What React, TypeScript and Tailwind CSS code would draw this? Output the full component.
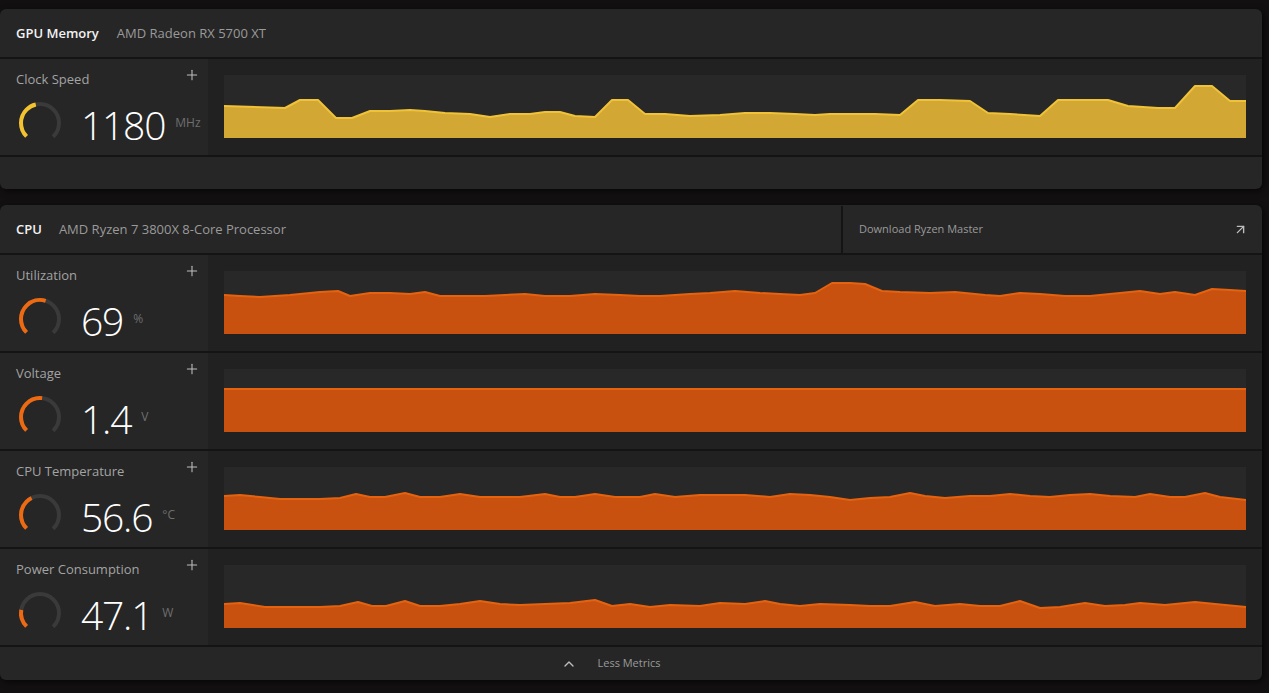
import React from "react";
import { Plus, ArrowUpRight, ChevronUp } from "lucide-react";

type Pt = [number, number];

const CHART_X = 224;
const CHART_W = 1022;
const CHART_H = 63;

const clock: Pt[] = [[224,106],[285,108],[300,100],[318,100],[336,118],[352,118],[370,111],[390,111],[410,110],[425,111],[445,113],[470,114],[490,117],[510,114],[530,114],[545,112],[560,112],[575,116],[595,117],[612,100],[628,100],[645,114],[665,114],[690,116],[720,115],[745,113],[770,113],[795,114],[815,115],[830,114],[855,114],[875,114],[900,115],[918,100],[940,100],[970,101],[988,113],[1010,114],[1040,116],[1058,100],[1080,100],[1108,100],[1128,106],[1158,108],[1175,108],[1195,86],[1212,86],[1230,101],[1246,101]];

const util: Pt[] = [[224,295],[240,296],[260,297],[290,295],[320,292],[338,291],[350,296],[370,293],[390,293],[410,294],[425,292],[440,296],[460,296],[485,296],[505,295],[525,294],[545,296],[570,296],[595,294],[620,295],[640,296],[660,296],[690,294],[710,293],[735,291],[760,293],[780,294],[800,295],[815,293],[832,283],[850,283],[865,284],[882,291],[900,292],[930,293],[955,292],[985,295],[1000,296],[1020,293],[1040,294],[1065,296],[1090,296],[1110,294],[1140,291],[1160,294],[1175,292],[1195,295],[1212,289],[1230,290],[1246,291]];

const volt: Pt[] = [[224,389],[1246,389]];

const temp: Pt[] = [[224,496],[240,495],[260,497],[280,499],[320,499],[340,498],[356,494],[370,497],[385,497],[405,493],[420,497],[440,497],[460,494],[480,497],[500,497],[520,497],[545,494],[560,497],[575,497],[595,494],[615,497],[640,497],[655,494],[675,497],[700,495],[720,495],[745,495],[770,497],[790,494],[810,495],[830,497],[850,500],[870,498],[890,497],[910,493],[925,496],[945,498],[970,496],[990,496],[1010,494],[1030,496],[1050,497],[1070,495],[1090,494],[1110,496],[1135,497],[1150,494],[1170,497],[1185,497],[1205,493],[1220,497],[1246,500]];

const power: Pt[] = [[224,604],[240,603],[265,607],[290,607],[320,607],[340,606],[358,602],[372,606],[386,606],[405,601],[420,606],[440,606],[460,604],[480,601],[500,604],[520,605],[545,604],[570,603],[595,600],[612,606],[630,604],[650,607],[670,605],[700,606],[720,603],[745,604],[765,601],[780,604],[800,606],[820,604],[850,605],[870,606],[890,606],[915,602],[935,606],[960,604],[980,606],[1000,606],[1020,601],[1040,608],[1060,607],[1085,603],[1105,606],[1125,605],[1140,603],[1165,605],[1195,602],[1215,604],[1246,607]];

const Chart: React.FC<{ pts: Pt[]; top: number; fill: string; line: string }> = ({ pts, top, fill, line }) => {
  const rel = pts.map(([x, y]) => `${x - CHART_X},${y - top}`);
  const area = `0,${CHART_H} ${rel.join(" ")} ${CHART_W},${CHART_H}`;
  return (
    <svg width={CHART_W} height={CHART_H} viewBox={`0 0 ${CHART_W} ${CHART_H}`} className="block bg-[#282828]">
      <polygon points={area} fill={fill} />
      <polyline points={rel.join(" ")} fill="none" stroke={line} strokeWidth={2} strokeLinejoin="round" />
    </svg>
  );
};

const Gauge: React.FC<{ frac: number; color: string }> = ({ frac, color }) => {
  const r = 19;
  const c = 2 * Math.PI * r;
  const track = c * 0.75;
  return (
    <svg width={48} height={48} viewBox="0 0 48 48" className="shrink-0">
      <g transform="rotate(135 24 24)">
        <circle cx={24} cy={24} r={r} fill="none" stroke="#3a3a3a" strokeWidth={4} strokeDasharray={`${track} ${c}`} />
        <circle cx={24} cy={24} r={r} fill="none" stroke={color} strokeWidth={4} strokeDasharray={`${track * frac} ${c}`} />
      </g>
    </svg>
  );
};

type Metric = {
  label: string;
  value: string;
  unit: string;
  frac: number;
  pts: Pt[];
  top: number;
};

const Row: React.FC<{ m: Metric; color: string; fill: string; line: string }> = ({ m, color, fill, line }) => (
  <div className="flex h-[96px]">
    <div className="w-[208px] shrink-0 bg-[#262626] pl-4 pr-[8px] pt-[10px]">
      <div className="flex items-start justify-between">
        <span className="text-[13px] text-[#a3a3a3] leading-5">{m.label}</span>
        <Plus size={16} strokeWidth={1.6} className="text-[#bdbdbd] -mt-[2px]" />
      </div>
      <div className="flex items-center mt-[10px]">
        <Gauge frac={m.frac} color={color} />
        <span className="ml-[17px] text-[39px] font-light text-white leading-none mt-[3px] tracking-[-1.2px]">{m.value}</span>
        <span className="ml-[10px] text-[12px] text-[#6f6f6f]">{m.unit}</span>
      </div>
    </div>
    <div className="flex-1 bg-[#212121] p-4">
      <Chart pts={m.pts} top={m.top} fill={fill} line={line} />
    </div>
  </div>
);

const Sep = () => <div className="h-[2px] bg-[#141414]" />;

const cpu: Metric[] = [
  { label: "Utilization", value: "69", unit: "%", frac: 0.56, pts: util, top: 271 },
  { label: "Voltage", value: "1.4", unit: "V", frac: 0.52, pts: volt, top: 369 },
  { label: "CPU Temperature", value: "56.6", unit: "°C", frac: 0.4, pts: temp, top: 467 },
  { label: "Power Consumption", value: "47.1", unit: "W", frac: 0.2, pts: power, top: 565 },
];

export default function App() {
  return (
    <div
      className="w-[1269px] h-[693px] overflow-hidden bg-[#121010] pt-[9px] text-white"
      style={{ fontFamily: '"Open Sans", "Noto Sans", sans-serif' }}
    >
      <div className="w-[1262px] rounded-md bg-[#262626] overflow-hidden shadow-[2px_2px_6px_rgba(0,0,0,0.6)]">
        <div className="h-[48px] flex items-center px-4 text-[13px] pt-[1px]">
          <span className="font-semibold text-[#f2f2f2]">GPU Memory</span>
          <span className="ml-[18px] text-[#9a9a9a]">AMD Radeon RX 5700 XT</span>
        </div>
        <Sep />
        <Row
          m={{ label: "Clock Speed", value: "1180", unit: "MHz", frac: 0.45, pts: clock, top: 75 }}
          color="#f2c230"
          fill="#d3a733"
          line="#f0c238"
        />
        <Sep />
        <div className="h-[32px]" />
      </div>

      <div className="mt-[16px] w-[1262px] rounded-md bg-[#262626] overflow-hidden shadow-[2px_2px_6px_rgba(0,0,0,0.6)]">
        <div className="h-[48px] flex text-[13px] pt-[1px]">
          <div className="w-[841px] flex items-center px-4">
            <span className="font-semibold text-[#f2f2f2]">CPU</span>
            <span className="ml-[17px] text-[#9a9a9a]">AMD Ryzen 7 3800X 8-Core Processor</span>
          </div>
          <div className="w-[2px] bg-[#141414]" />
          <div className="flex-1 flex items-center justify-between pl-4 pr-[14px]">
            <span className="text-[11px] text-[#9a9a9a]">Download Ryzen Master</span>
            <ArrowUpRight size={15} strokeWidth={2.2} className="text-[#bdbdbd]" />
          </div>
        </div>
        <Sep />
        {cpu.map((m) => (
          <React.Fragment key={m.label}>
            <Row m={m} color="#ee6a12" fill="#c8510f" line="#e5620f" />
            <Sep />
          </React.Fragment>
        ))}
        <div className="h-[33px] flex items-center justify-center pr-[40px]">
          <ChevronUp size={16} strokeWidth={2} className="text-[#bdbdbd]" />
          <span className="ml-[20px] text-[11px] text-[#9a9a9a]">Less Metrics</span>
        </div>
      </div>
    </div>
  );
}
